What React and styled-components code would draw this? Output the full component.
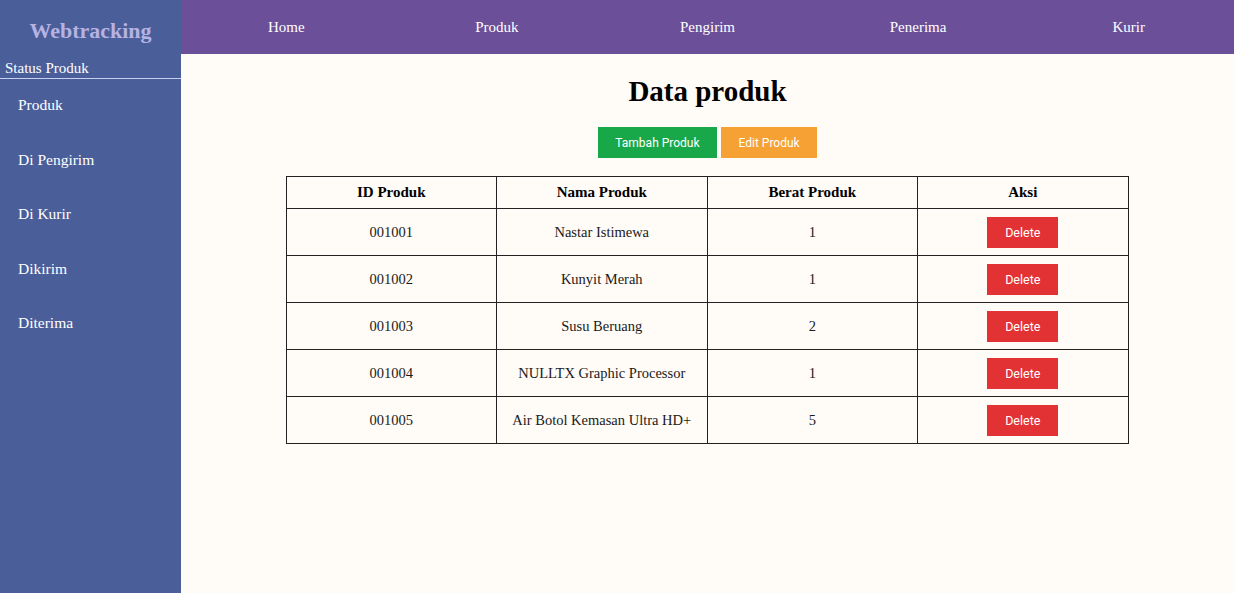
import styled, { createGlobalStyle } from "styled-components";

const GlobalStyle = createGlobalStyle`
  html, body {
    margin: 0;
    padding: 0;
    background: #fffbf7;
    font-family: "Liberation Serif", "Times New Roman", serif;
  }
`;

const navLinks = ["Home", "Produk", "Pengirim", "Penerima", "Kurir"];
const statusLinks = ["Produk", "Di Pengirim", "Di Kurir", "Dikirim", "Diterima"];

const products = [
  { id: "001001", name: "Nastar Istimewa", weight: 1 },
  { id: "001002", name: "Kunyit Merah", weight: 1 },
  { id: "001003", name: "Susu Beruang", weight: 2 },
  { id: "001004", name: "NULLTX Graphic Processor", weight: 1 },
  { id: "001005", name: "Air Botol Kemasan Ultra HD+", weight: 5 },
];

export default function App() {
  return (
    <>
      <GlobalStyle />
      <Page>
        <Sidebar>
          <Brand>Webtracking</Brand>
          <SideTitle>Status Produk</SideTitle>
          <SideList>
            {statusLinks.map((s) => (
              <SideItem key={s}>{s}</SideItem>
            ))}
          </SideList>
        </Sidebar>
        <Main>
          <TopNav>
            {navLinks.map((n) => (
              <NavItem key={n}>{n}</NavItem>
            ))}
          </TopNav>
          <Content>
            <Title>Data produk</Title>
            <ButtonRow>
              <ActionButton $color="#18a84a">Tambah Produk</ActionButton>
              <ActionButton $color="#f5a133">Edit Produk</ActionButton>
            </ButtonRow>
            <Table>
              <thead>
                <tr>
                  <Th>ID Produk</Th>
                  <Th>Nama Produk</Th>
                  <Th>Berat Produk</Th>
                  <Th>Aksi</Th>
                </tr>
              </thead>
              <tbody>
                {products.map((p) => (
                  <tr key={p.id}>
                    <Td>{p.id}</Td>
                    <Td>{p.name}</Td>
                    <Td>{p.weight}</Td>
                    <Td>
                      <DeleteButton>Delete</DeleteButton>
                    </Td>
                  </tr>
                ))}
              </tbody>
            </Table>
          </Content>
        </Main>
      </Page>
    </>
  );
}

const Page = styled.div`
  display: flex;
  min-height: 593px;
  height: 100vh;
`;

const Sidebar = styled.aside`
  width: 181px;
  flex-shrink: 0;
  background: #4a5e99;
  display: flex;
  flex-direction: column;
`;

const Brand = styled.div`
  height: 58px;
  padding-top: 3px;
  box-sizing: border-box;
  display: flex;
  align-items: center;
  justify-content: center;
  font-size: 22px;
  font-weight: bold;
  color: #b6b2e2;
`;

const SideTitle = styled.div`
  padding: 2px 0 1px 5px;
  font-size: 15px;
  color: #ffffff;
  border-bottom: 1px solid #c9cff0;
`;

const SideList = styled.ul`
  list-style: none;
  margin: 0;
  padding: 16px 0 0 18px;
`;

const SideItem = styled.li`
  height: 54.5px;
  font-size: 15.5px;
  line-height: 20px;
  color: #ffffff;
`;

const Main = styled.div`
  flex: 1;
  display: flex;
  flex-direction: column;
`;

const TopNav = styled.nav`
  height: 54px;
  background: #6b4f98;
  display: grid;
  grid-template-columns: repeat(5, 1fr);
  align-items: center;
`;

const NavItem = styled.a`
  text-align: center;
  color: #ffffff;
  font-size: 15px;
`;

const Content = styled.main`
  display: flex;
  flex-direction: column;
  align-items: center;
  padding-top: 19px;
`;

const Title = styled.h1`
  margin: 0;
  font-size: 29px;
  line-height: 36px;
  font-weight: bold;
  color: #000;
`;

const ButtonRow = styled.div`
  display: flex;
  gap: 4px;
  margin-top: 18px;
`;

const ActionButton = styled.button`
  border: none;
  background: ${(p) => p.$color};
  color: #ffffff;
  font-family: Roboto, "Liberation Sans", Arial, sans-serif;
  font-size: 12px;
  height: 31px;
  padding: 0 17.5px;
`;

const Table = styled.table`
  width: 843px;
  margin-top: 18px;
  margin-right: 1px;
  border-collapse: collapse;
  table-layout: fixed;
  color: #1a1a1a;
`;

const Th = styled.th`
  border: 1px solid #222;
  height: 31px;
  font-size: 15px;
  font-weight: bold;
  text-align: center;
  padding: 0;
  color: #000;
`;

const Td = styled.td`
  border: 1px solid #222;
  height: 46px;
  font-size: 14.5px;
  text-align: center;
  padding: 0;
`;

const DeleteButton = styled.button`
  border: none;
  background: #e23234;
  color: #ffffff;
  font-family: Roboto, "Liberation Sans", Arial, sans-serif;
  font-size: 12.5px;
  width: 71px;
  height: 31px;
  padding: 0;
  vertical-align: middle;
`;
